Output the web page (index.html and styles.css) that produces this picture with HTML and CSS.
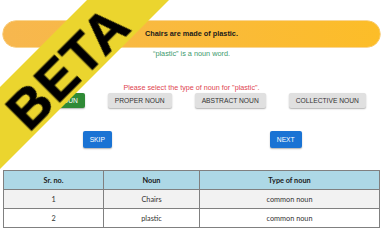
FILE: index.html
```html
<!DOCTYPE html>
<html lang="en">
<head>
  <meta charset="UTF-8">
  <title>Noun quiz</title>
  <link rel="stylesheet" href="styles.css">
</head>
<body>
  <div class="beta">BETA</div>
  <div class="container">
    <div class="sentence">Chairs are made of plastic.</div>
    <p class="hint">“plastic” is a noun word.</p>

    <p class="prompt">Please select the type of noun for "plastic".</p>
    <div class="choices">
      <button class="choice correct">COMMON NOUN</button>
      <button class="choice">PROPER NOUN</button>
      <button class="choice">ABSTRACT NOUN</button>
      <button class="choice">COLLECTIVE NOUN</button>
    </div>

    <div class="nav">
      <div><button class="nav-btn">SKIP</button></div>
      <div><button class="nav-btn">NEXT</button></div>
    </div>

    <table class="results">
      <tr><th>Sr. no.</th><th>Noun</th><th>Type of noun</th></tr>
      <tr><td>1</td><td>Chairs</td><td>common noun</td></tr>
      <tr><td>2</td><td>plastic</td><td>common noun</td></tr>
    </table>
  </div>
</body>
</html>
```

FILE: styles.css
```css
body { margin: 0; font-family: "Liberation Sans", Arial, sans-serif; background: #fff; color: #222; }
.container { margin: 0 4px 0 3px; padding-top: 21px; }
.sentence { height: 26px; line-height: 26px; border-radius: 13px; background: linear-gradient(to right, #f7b74f, #fcbd28); text-align: center; font-weight: bold; font-size: 7.3px; color: #1a1a1a; box-shadow: 0 0 0 0.5px #f3ad2a; }
.hint { margin: 2px 0 0; text-align: center; font-size: 7.3px; line-height: 10px; color: #3c9a6c; }
.prompt { margin: 24px 0 0; text-align: center; font-size: 7.2px; line-height: 10px; color: #e0444f; }
.choices { display: flex; justify-content: center; gap: 23px; margin-top: 0; padding-left: 1px; }
.choice { font-family: "Liberation Sans", Arial, sans-serif; font-size: 6.7px; height: 15px; padding: 0 7px; border: none; border-radius: 2px; background: #e0e0e0; color: #333; box-shadow: 0 1px 1.5px rgba(0,0,0,0.3); }
.choice.correct { background: #2f8a36; color: #fff; }
.nav { display: grid; grid-template-columns: 1fr 1fr; margin-top: 23px; }
.nav div { display: flex; justify-content: center; }
.nav-btn { font-family: "Liberation Sans", Arial, sans-serif; font-size: 6.7px; height: 17px; padding: 0 7px; border: none; border-radius: 2px; background: #1a73d4; color: #fff; box-shadow: 0 1px 1.5px rgba(0,0,0,0.3); }
.results { width: 100%; margin-top: 22px; border-collapse: collapse; font-family: Lato, "Liberation Sans", sans-serif; font-size: 7.3px; }
.results th, .results td { height: 18px; padding: 0; border: 1px solid #808080; text-align: center; color: #333; }
.results th { background: #add8e6; color: #1a1a1a; font-weight: bold; }
.results tr:nth-child(2) td { background: #f2f2f2; }
.results th:nth-child(1) { width: 99px; }
.results th:nth-child(2) { width: 95px; }
.beta { position: fixed; left: -86px; top: 35px; width: 300px; height: 58px; line-height: 68px; transform: rotate(-45deg); background: #ebd52e; color: #000; text-align: center; font-weight: bold; font-size: 54px; letter-spacing: 1px; font-family: "Liberation Sans", Arial, sans-serif; -webkit-text-stroke: 1px #000; z-index: 10; }
```
